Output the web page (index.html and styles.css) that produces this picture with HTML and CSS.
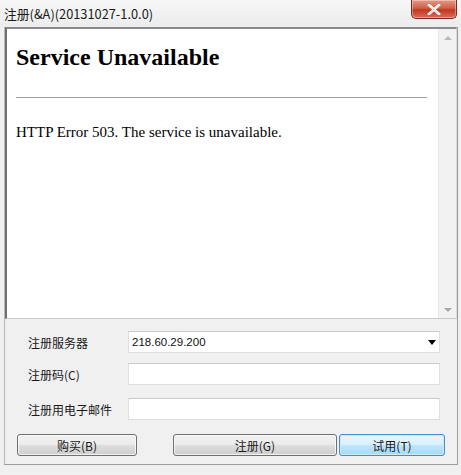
FILE: index.html
```html
<!DOCTYPE html>
<html>
<head>
<meta charset="utf-8">
<link rel="stylesheet" href="styles.css">
</head>
<body>
<div class="window">
  <div class="titlebar">
    <span class="title">注册(&amp;A)(20131027-1.0.0)</span>
    <div class="close">
      <svg width="18" height="11" viewBox="0 0 18 11"><path d="M4 1 L14 10 M14 1 L4 10" stroke="#fff" stroke-width="2.6" stroke-linecap="square"/><path d="M4 1 L14 10 M14 1 L4 10" stroke="#8a8a8a" stroke-width="0.6" fill="none" opacity="0.5"/></svg>
    </div>
  </div>
  <div class="frame">
    <div class="webview">
      <div class="page">
        <h1>Service Unavailable</h1>
        <hr>
        <p>HTTP Error 503. The service is unavailable.</p>
      </div>
      <div class="scrollbar">
        <div class="arrow up"></div>
        <div class="arrow down"></div>
      </div>
    </div>
    <div class="form">
      <div class="row r1">
        <label>注册服务器</label>
        <div class="field select"><span>218.60.29.200</span><span class="caret"></span></div>
      </div>
      <div class="row r2">
        <label>注册码(C)</label>
        <div class="field"></div>
      </div>
      <div class="row r3">
        <label>注册用电子邮件</label>
        <div class="field"></div>
      </div>
      <div class="buttons">
        <div class="btn b1">购买(B)</div>
        <div class="btn b2">注册(G)</div>
        <div class="btn b3 focus">试用(T)</div>
      </div>
    </div>
  </div>
</div>
</body>
</html>
```
FILE: styles.css
```css
html, body {
  margin: 0;
  padding: 0;
}
body {
  width: 461px;
  height: 475px;
  background: #f0f0f0;
  overflow: hidden;
  font-family: "Noto Sans CJK SC", "Liberation Sans", sans-serif;
  font-size: 12px;
  color: #000;
}
.window {
  width: 461px;
  height: 475px;
  background: #f0f0f0;
}
.titlebar {
  height: 27px;
  display: flex;
  justify-content: space-between;
  align-items: flex-start;
  background: linear-gradient(#f7f7f7, #ececec);
}
.title {
  margin: 5px 0 0 4px;
  line-height: 17px;
  font-size: 12.8px;
  color: #1a1a1a;
}
.close {
  width: 44px;
  height: 18px;
  margin-right: 4px;
  border: 1px solid #7a2a20;
  border-top: none;
  border-radius: 0 0 5px 5px;
  background: linear-gradient(#e49a88 0%, #d06048 45%, #c2361f 55%, #d8705a 100%);
  display: flex;
  align-items: center;
  justify-content: center;
  box-shadow: inset 0 0 0 1px rgba(255,255,255,0.35);
}
.frame {
  margin-left: 4px;
  width: 452px;
  height: 437px;
  border-right: 1px solid #9c9c9c;
  border-bottom: 1px solid #9c9c9c;
  border-left: 1px solid #b8b8b8;
  display: flex;
  flex-direction: column;
}
.webview {
  height: 289px;
  display: flex;
  border-top: 2px solid #8a8a8a;
  border-left: 2px solid #707070;
  border-bottom: 1px solid #c8c8c8;
  border-right: 1px solid #dadada;
  background: #fff;
}
.page {
  flex: 1;
  padding: 0 11px 0 9px;
  font-family: "Liberation Serif", serif;
}
.page h1 {
  margin: 14px 0 0;
  font-size: 24px;
  line-height: 28px;
  font-weight: bold;
}
.page hr {
  margin: 26px 0 0;
  height: 0;
  border: 0;
  border-top: 1px solid #a0a0a0;
}
.page p {
  margin: 25px 0 0;
  font-size: 15px;
  line-height: 18px;
}
.scrollbar {
  width: 17px;
  background: #f2f2f2;
  border-left: 1px solid #e8e8e8;
  display: flex;
  flex-direction: column;
  justify-content: space-between;
  align-items: center;
  padding: 7px 0 6px;
}
.arrow {
  width: 0;
  height: 0;
  border-left: 4px solid transparent;
  border-right: 4px solid transparent;
}
.arrow.up {
  border-bottom: 4px solid #b8b8b8;
}
.arrow.down {
  border-top: 4px solid #a8a8a8;
}
.form {
  flex: 1;
  padding-left: 23px;
}
.row {
  display: flex;
  align-items: center;
  height: 22px;
}
.row label {
  width: 100px;
  font-size: 12px;
  color: #1a1a1a;
}
.r1 { margin-top: 12px; }
.r2 { margin-top: 10px; }
.r3 { margin-top: 13px; }
.field {
  width: 310px;
  height: 20px;
  background: #fff;
  border: 1px solid #dcdfe4;
  border-top-color: #c8cacf;
  display: flex;
  align-items: center;
  justify-content: space-between;
  padding: 0;
}
.select span:first-child {
  margin-left: 3px;
  font-family: "Liberation Sans", sans-serif;
  font-size: 11.5px;
  color: #111;
}
.caret {
  width: 0;
  height: 0;
  border-left: 4px solid transparent;
  border-right: 4px solid transparent;
  border-top: 5px solid #000;
  margin-right: 3px;
}
.buttons {
  display: flex;
  margin-top: 14px;
  margin-left: -11px;
}
.btn {
  height: 20px;
  border: 1px solid #707070;
  border-radius: 3px;
  background: linear-gradient(#f2f2f2 0%, #ebebeb 48%, #dddddd 52%, #cfcfcf 100%);
  display: flex;
  align-items: center;
  justify-content: center;
  font-size: 12px;
  color: #1a1a1a;
  box-shadow: inset 0 0 0 1px rgba(255,255,255,0.7);
}
.b1 { width: 118px; }
.b2 { width: 162px; margin-left: 36px; }
.b3 { width: 104px; margin-left: 2px; }
.btn.focus {
  border-color: #3c8fd0;
  background: linear-gradient(#eaf6fd 0%, #d9f0fc 48%, #bee6fd 52%, #a7d9f5 100%);
  box-shadow: inset 0 0 0 1px #cfeaf9;
}
```
